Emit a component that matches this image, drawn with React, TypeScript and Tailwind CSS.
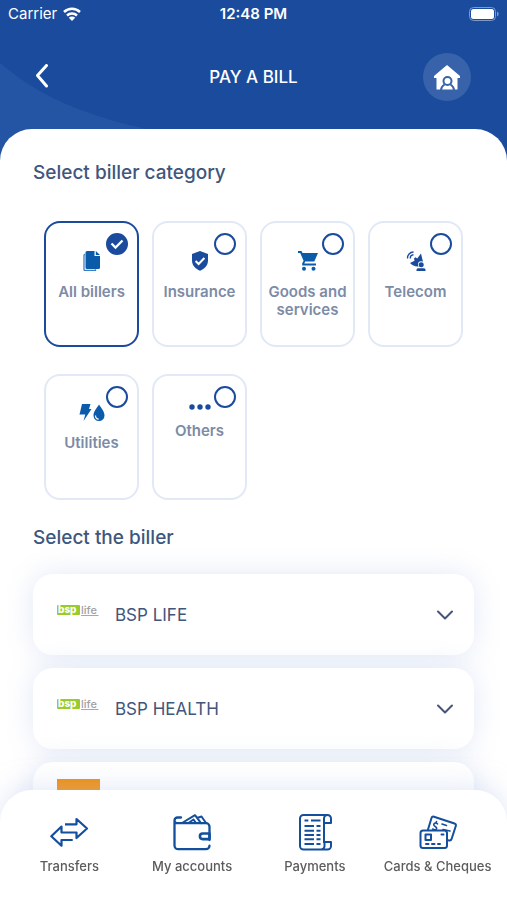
import { useState, type ReactNode } from 'react';

type Category = { id: string; label: string; icon: ReactNode };

const categories: Category[] = [
  { id: 'all', label: 'All billers', icon: <FilesIcon /> },
  { id: 'insurance', label: 'Insurance', icon: <ShieldIcon /> },
  { id: 'goods', label: 'Goods and services', icon: <CartIcon /> },
  { id: 'telecom', label: 'Telecom', icon: <DishIcon /> },
  { id: 'utilities', label: 'Utilities', icon: <UtilitiesIcon /> },
  { id: 'others', label: 'Others', icon: <DotsIcon /> },
];

const tabs = [
  { label: 'Transfers', icon: <TransfersIcon /> },
  { label: 'My accounts', icon: <WalletIcon /> },
  { label: 'Payments', icon: <ReceiptIcon /> },
  { label: 'Cards & Cheques', icon: <CardsIcon /> },
];

function FilesIcon() {
  return (
    <svg width="18" height="20" viewBox="0 0 18 20" aria-hidden>
      <path d="M2 3.5H1.6A1 1 0 0 0 1 4.500V18.500a1 1 0 0 0 1 1H12.500v-1.200" fill="none" stroke="#3d7fbd" strokeWidth="1.300" />
      <path d="M4 0h7.500v5H17v11.500a1.500 1.500 0 0 1-1.500 1.500H4a1.500 1.500 0 0 1-1.500-1.500v-15A1.500 1.500 0 0 1 4 0z" fill="#0a5cab" />
      <path d="M12.800 0 17 4h-4.200z" fill="#0a5cab" />
    </svg>
  );
}

function ShieldIcon() {
  return (
    <svg width="18" height="20" viewBox="0 0 18 20" aria-hidden>
      <path d="M9 0 17 3v6.500c0 5-3.500 8.500-8 10.200-4.500-1.700-8-5.200-8-10.200V3z" fill="#1b4b9d" />
      <path d="m4.600 10 3 3L13.400 7" fill="none" stroke="#fff" strokeWidth="2" />
    </svg>
  );
}

function CartIcon() {
  return (
    <svg width="20" height="20" viewBox="0 0 20 20" fill="#0a5cab" aria-hidden>
      <path d="M0 0h3.500l1 2H20l-3.700 8.500H7.200L6.300 12.500H18v2H4.200v-2.300l1.400-2.500L2.200 2H0z" />
      <circle cx="6" cy="17.700" r="2" />
      <circle cx="15.500" cy="17.700" r="2" />
    </svg>
  );
}

function DishIcon() {
  return (
    <svg width="20" height="20" viewBox="0 0 20 20" aria-hidden>
      <path d="M1.500 7.500A6 6 0 0 1 7.500 1M4.300 7.500A3.500 3.500 0 0 1 7.500 3.800" fill="none" stroke="#1b4b9d" strokeWidth="1.400" />
      <path d="M15 2.500 17.500 13c-4 4-10 3-13.500-1l4.500-2.300L8 7.500l1.500-1.200 1.700 1.200z" fill="#1b4b9d" />
      <circle cx="15.200" cy="13.500" r="3.200" fill="#fff" />
      <circle cx="15.200" cy="13.700" r="2.500" fill="#1b4b9d" />
      <path d="M10.500 20v-1.200a1.500 1.500 0 0 1 1.500-1.500h6a1.500 1.500 0 0 1 1.500 1.500V20z" fill="#1b4b9d" />
    </svg>
  );
}

function UtilitiesIcon() {
  return (
    <svg width="26" height="18" viewBox="0 0 26 18" aria-hidden>
      <path d="M3 0H11.500L10 5h2.500L4.500 17l1.800-6.500H.5z" fill="#0a5cab" />
      <path d="M20 .5c2.500 4 5.500 7 5.500 11a5.500 5.500 0 0 1-11 0c0-4 3-7 5.500-11z" fill="#0a5cab" />
      <path d="M16.500 11.500c0 2 1.200 3.500 3.200 3.700" fill="none" stroke="#fff" strokeWidth="1.200" />
    </svg>
  );
}

function DotsIcon() {
  return (
    <svg width="22" height="6" viewBox="0 0 22 6" fill="#1b4b9d" aria-hidden>
      <circle cx="3" cy="3" r="2.700" />
      <circle cx="11" cy="3" r="2.700" />
      <circle cx="19" cy="3" r="2.700" />
    </svg>
  );
}

function TransfersIcon() {
  return (
    <svg width="38" height="38" viewBox="0 0 38 38" fill="none" stroke="#134f9c" strokeWidth="2.200" strokeLinejoin="round" aria-hidden>
      <path d="M15 10.300H26.500V5L37 14.500 26.500 24v-5.500H11.500V12.500L1.300 22.200l10.200 9.500V26H22.700" />
    </svg>
  );
}

function WalletIcon() {
  return (
    <svg width="38" height="38" viewBox="0 0 38 38" fill="none" stroke="#134f9c" strokeWidth="2.300" strokeLinecap="round" strokeLinejoin="round" aria-hidden>
      <path d="M8 3.500H4.500A3 3 0 0 0 1.500 6.500v25a3.700 3.700 0 0 0 3.700 3.700H33a3.500 3.500 0 0 0 3.500-3.500M1.500 6.500A2.700 2.700 0 0 0 4.200 9.200H33a3.500 3.500 0 0 1 3.500 3.500V26" />
      <path d="M9 9 22 1.200l6 8M24 4l4.500-1.500L33 9M15.500 9l5-3.500L23 9" strokeWidth="2" />
      <path d="M36.500 19.500H29.700a2.800 2.800 0 0 0 0 5.600h6.800z" strokeWidth="2.600" />
    </svg>
  );
}

function ReceiptIcon() {
  return (
    <svg width="38" height="38" viewBox="0 0 38 38" fill="none" stroke="#134f9c" strokeWidth="2" strokeLinejoin="round" aria-hidden>
      <path d="M28 29V4.500A3.500 3.500 0 0 1 31.500 1H7.500A3.500 3.500 0 0 0 4 4.500V32A3.500 3.500 0 0 0 7.500 35.500H31.500A3.500 3.500 0 0 0 35 32V28H28.500v4a3.500 3.500 0 0 1-3.500 3.500M31.500 1A3.500 3.500 0 0 1 35 4.500V9H28" />
      <path d="M8.500 6.500h3.800M15 6.500h9.500M8.500 12h9.500M20.500 12h4M8.500 16.700h9.500M20.500 16.700h4M8.500 21h9.500M20.500 21h4M8.500 25.300h9.500M20.500 25.300h4M8.500 30h9.500M20.500 30h4" />
    </svg>
  );
}

function CardsIcon() {
  return (
    <svg width="38" height="38" viewBox="0 0 38 38" fill="none" stroke="#134f9c" strokeWidth="2" strokeLinecap="round" strokeLinejoin="round" aria-hidden>
      <path d="M9 15.500 12.500 4a2 2 0 0 1 2.500-1.300L35.500 9.500a2 2 0 0 1 1.300 2.500L32.500 25.200a2 2 0 0 1-2.500 1.200L28 26" />
      <path d="M18.500 9.800c-1.500-1.300-3.500-.8-3.800.7-.4 2 3.500 2 3 4-.3 1.500-2.500 1.500-4 .5M17.500 7.500l-.5 1.500M23 10l4.500 1.500M24 15.500l7 1.500" strokeWidth="1.600" />
      <rect x="1.500" y="16.500" width="26.500" height="17.500" rx="2.500" fill="#fff" />
      <path d="M6.500 20.500H12V26H6.500zM22.500 20.500H24.500M7 30h2.500M13 30h2.500M19 30h2" />
    </svg>
  );
}

function BspLogo() {
  return (
    <svg className="mb-2 shrink-0" width="42" height="13" viewBox="0 0 42 13" aria-hidden>
      <rect y="1" width="23" height="10" rx="1" fill="#9acb2c" />
      <text x="1" y="8.500" fontSize="10" fontWeight="800" fill="#fff" fontFamily="Inter, sans-serif">bsp</text>
      <text x="24" y="10" fontSize="11" fontWeight="500" fill="#a0a0a5" fontFamily="Inter, sans-serif">life</text>
      <path d="M24 11.500h17.500" stroke="#e88b98" />
    </svg>
  );
}

function StatusBar() {
  return (
    <div className="grid h-7 grid-cols-3 items-center px-2 text-[15px] leading-5">
      <div className="flex items-center gap-[6px]">
        <span>Carrier</span>
        <svg width="18" height="14" viewBox="0 0 18 14" fill="none" stroke="#fff" strokeWidth="2.500" aria-hidden>
          <path d="M1 5a11.500 11.500 0 0 1 16 0M4 8.500a7.300 7.300 0 0 1 10 0" />
          <path d="M9 14 5.800 10.800a4.600 4.600 0 0 1 6.400 0z" fill="#fff" stroke="none" />
        </svg>
      </div>
      <span className="text-center font-semibold">12:48 PM</span>
      <svg className="justify-self-end" width="30" height="14" viewBox="0 0 30 14" aria-hidden>
        <rect x=".5" y=".5" width="26" height="13" rx="4" fill="none" stroke="#7d9acb" />
        <rect x="2" y="2" width="23" height="10" rx="2.500" fill="#fff" />
        <path d="M28 4.500a2.700 2.700 0 0 1 0 5z" fill="#7d9acb" />
      </svg>
    </div>
  );
}

function Header() {
  return (
    <header className="relative shrink-0 bg-[#1b4b9d] pb-[60px] text-white">
      <svg className="absolute bottom-0 left-0" width="160" height="98" viewBox="0 0 160 98" aria-hidden>
        <path d="M0 0c38 32 82 53 160 69v29H0z" fill="#2454a4" />
      </svg>
      <div className="relative">
        <StatusBar />
        <div className="mt-[25px] grid h-12 grid-cols-[48px_1fr_48px] items-center px-9">
          <button type="button" aria-label="Back" className="justify-self-start">
            <svg width="14" height="26" viewBox="0 0 14 26" fill="none" stroke="#fff" strokeWidth="3" strokeLinecap="round" strokeLinejoin="round" aria-hidden>
              <path d="M10.500 1.500 1.500 11.500l9 10.500" />
            </svg>
          </button>
          <h1 className="text-center text-[17px] font-medium leading-6">PAY A BILL</h1>
          <button type="button" aria-label="Home" className="flex size-12 items-center justify-center rounded-full bg-[#3863aa]">
            <svg width="26" height="26" viewBox="0 0 26 26" aria-hidden>
              <path d="M13 1 26 12v2h-2.500v11.500h-21V14H0v-2z" fill="#fff" />
              <g fill="none" stroke="#3863aa" strokeWidth="2">
                <circle cx="13.500" cy="17" r="4" />
                <path d="M7 26c.2-2.500 1.500-4.300 3.500-5.500M20 26c-.2-2.500-1.500-4.300-3.500-5.500" />
              </g>
            </svg>
          </button>
        </div>
      </div>
    </header>
  );
}

function CategoryCard({ category, checked, onSelect }: { category: Category; checked: boolean; onSelect: () => void }) {
  return (
    <label className="relative flex h-[126px] cursor-pointer flex-col items-center gap-3 rounded-2xl border-2 border-[#e2e9f6] pt-7 has-checked:border-[#1b4b9d]">
      <input
        type="radio"
        name="category"
        checked={checked}
        onChange={onSelect}
        className="peer absolute right-[9px] top-[10px] size-[22px] appearance-none rounded-full border-2 border-[#1b4b9d] bg-white checked:bg-[#1b4b9d]"
      />
      <svg className="pointer-events-none absolute right-[9px] top-[10px] hidden peer-checked:block" width="22" height="22" viewBox="0 0 22 22" fill="none" stroke="#fff" strokeWidth="2.300" aria-hidden>
        <path d="m5.500 10.500 4 4L16.500 7.500" />
      </svg>
      {category.icon}
      <span className="text-center text-[15px] font-semibold leading-[18px] text-[#7c8ba6]">{category.label}</span>
    </label>
  );
}

function BillerRow({ name, logo }: { name?: string; logo: ReactNode }) {
  return (
    <button
      type="button"
      aria-label={name ?? 'Biller'}
      className="flex h-[81px] w-full items-center gap-4 rounded-[20px] bg-white px-6 text-left shadow-[0_0_28px_rgba(190,204,236,0.45)]"
    >
      {logo}
      <span className="flex-1 text-[17px] leading-6 text-[#40567c]">{name}</span>
      <svg className="-mr-1 shrink-0" width="18" height="10" viewBox="0 0 18 10" fill="none" stroke="#44547a" strokeWidth="2" strokeLinecap="round" strokeLinejoin="round" aria-hidden>
        <path d="m2 1.500 7 7 7-7" />
      </svg>
    </button>
  );
}

export default function App() {
  const [selected, setSelected] = useState('all');

  return (
    <div className="flex h-screen flex-col overflow-hidden bg-white font-['Inter',sans-serif]">
      <Header />
      <main className="relative -mt-8 min-h-0 flex-1 overflow-y-auto rounded-t-[32px] bg-white pt-8 [scrollbar-width:none]">
        <h2 id="category-title" className="px-[33px] text-[19px] font-medium leading-6 text-[#40567c]">Select biller category</h2>
        <div role="radiogroup" aria-labelledby="category-title" className="mt-9 grid grid-cols-4 gap-x-[13px] gap-y-[27px] px-11">
          {categories.map((category) => (
            <CategoryCard
              key={category.id}
              category={category}
              checked={selected === category.id}
              onSelect={() => setSelected(category.id)}
            />
          ))}
        </div>
        <h2 className="mt-[26px] px-[33px] text-[19px] font-medium leading-6 text-[#40567c]">Select the biller</h2>
        <div className="mt-6 flex flex-col gap-[13px] px-[33px] pb-12">
          <BillerRow name="BSP LIFE" logo={<BspLogo />} />
          <BillerRow name="BSP HEALTH" logo={<BspLogo />} />
          <BillerRow logo={<span className="h-12 w-[43px] shrink-0 bg-[#f08c0c]" />} />
        </div>
      </main>
      <nav className="relative -mt-8 grid shrink-0 grid-cols-4 rounded-t-[32px] bg-white px-2 pb-[26px] pt-6 shadow-[0_0_28px_rgba(190,204,236,0.5)]">
        {tabs.map((tab) => (
          <a key={tab.label} href="#" className="flex flex-col items-center gap-[6px]">
            {tab.icon}
            <span className="whitespace-nowrap text-[13px] font-medium leading-4 text-[#5c5c5c]">{tab.label}</span>
          </a>
        ))}
      </nav>
    </div>
  );
}
